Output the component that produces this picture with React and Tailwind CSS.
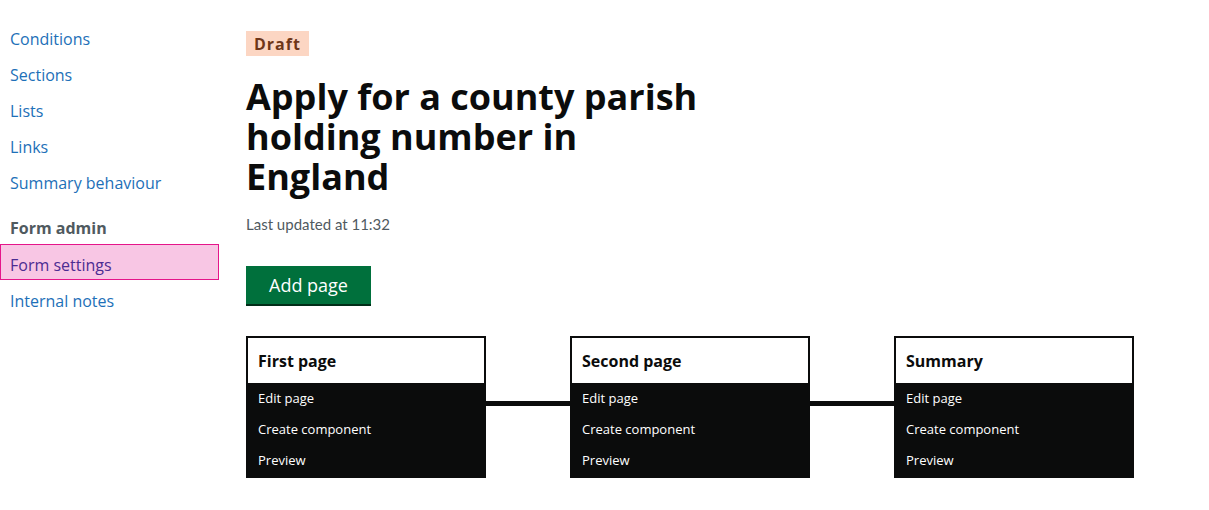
import React from "react";

const links = ["Conditions", "Sections", "Lists", "Links", "Summary behaviour"];

function Card({ title }) {
  return (
    <div className="w-[240px] border-2 border-[#0b0c0c] bg-[#0b0c0c] shrink-0">
      <div className="bg-white h-[45px] flex items-center px-[10px] text-[16px] font-bold text-[#0b0c0c]">
        {title}
      </div>
      {["Edit page", "Create component", "Preview"].map((t) => (
        <div key={t} className="h-[31px] flex items-center px-[10px] text-[13px] text-white">
          {t}
        </div>
      ))}
    </div>
  );
}

function Connector() {
  return (
    <div className="w-[84px] shrink-0 pt-[65px]">
      <div className="h-[5px] bg-[#0b0c0c]" />
    </div>
  );
}

export default function App() {
  return (
    <div
      className="flex min-h-[510px] bg-white text-[#0b0c0c]"
      style={{ fontFamily: '"Open Sans", "Noto Sans", sans-serif' }}
    >
      <nav className="w-[219px] shrink-0 pt-[21px] flex flex-col">
        {links.map((l) => (
          <a key={l} href="#" className="h-[36px] flex items-center px-[10px] text-[16px] text-[#1d70b8]">
            {l}
          </a>
        ))}
        <div className="h-[33px] mt-[10px] flex items-center px-[10px] text-[16px] font-bold text-[#505a5f]">
          Form admin
        </div>
        <a href="#" className="h-[36px] mb-[3px] pt-[6px] flex items-center px-[9px] text-[16px] text-[#4c2c92] bg-[#f8c6e4] border border-[#e5158a]">
          Form settings
        </a>
        <a href="#" className="h-[36px] flex items-center px-[10px] text-[16px] text-[#1d70b8]">
          Internal notes
        </a>
      </nav>
      <main className="ml-[27px] pt-[31px] flex flex-col items-start">
        <span className="h-[25px] px-[8px] flex items-center bg-[#fcd6c3] text-[#6e3619] text-[16px] font-bold tracking-[1px]">
          Draft
        </span>
        <h1 className="mt-[21px] max-w-[465px] text-[36px] leading-[40px] font-bold">
          Apply for a county parish holding number in England
        </h1>
        <p
          className="mt-[15px] text-[15px] leading-[24px] text-[#505a5f]"
          style={{ fontFamily: 'Lato, "Open Sans", sans-serif' }}
        >
          Last updated at 11:32
        </p>
        <button className="mt-[30px] w-[125px] h-[38px] bg-[#00703c] text-white text-[18px] shadow-[0_2px_0_#002d18]">
          Add page
        </button>
        <div className="mt-[32px] flex items-start">
          <Card title="First page" />
          <Connector />
          <Card title="Second page" />
          <Connector />
          <Card title="Summary" />
        </div>
      </main>
    </div>
  );
}
